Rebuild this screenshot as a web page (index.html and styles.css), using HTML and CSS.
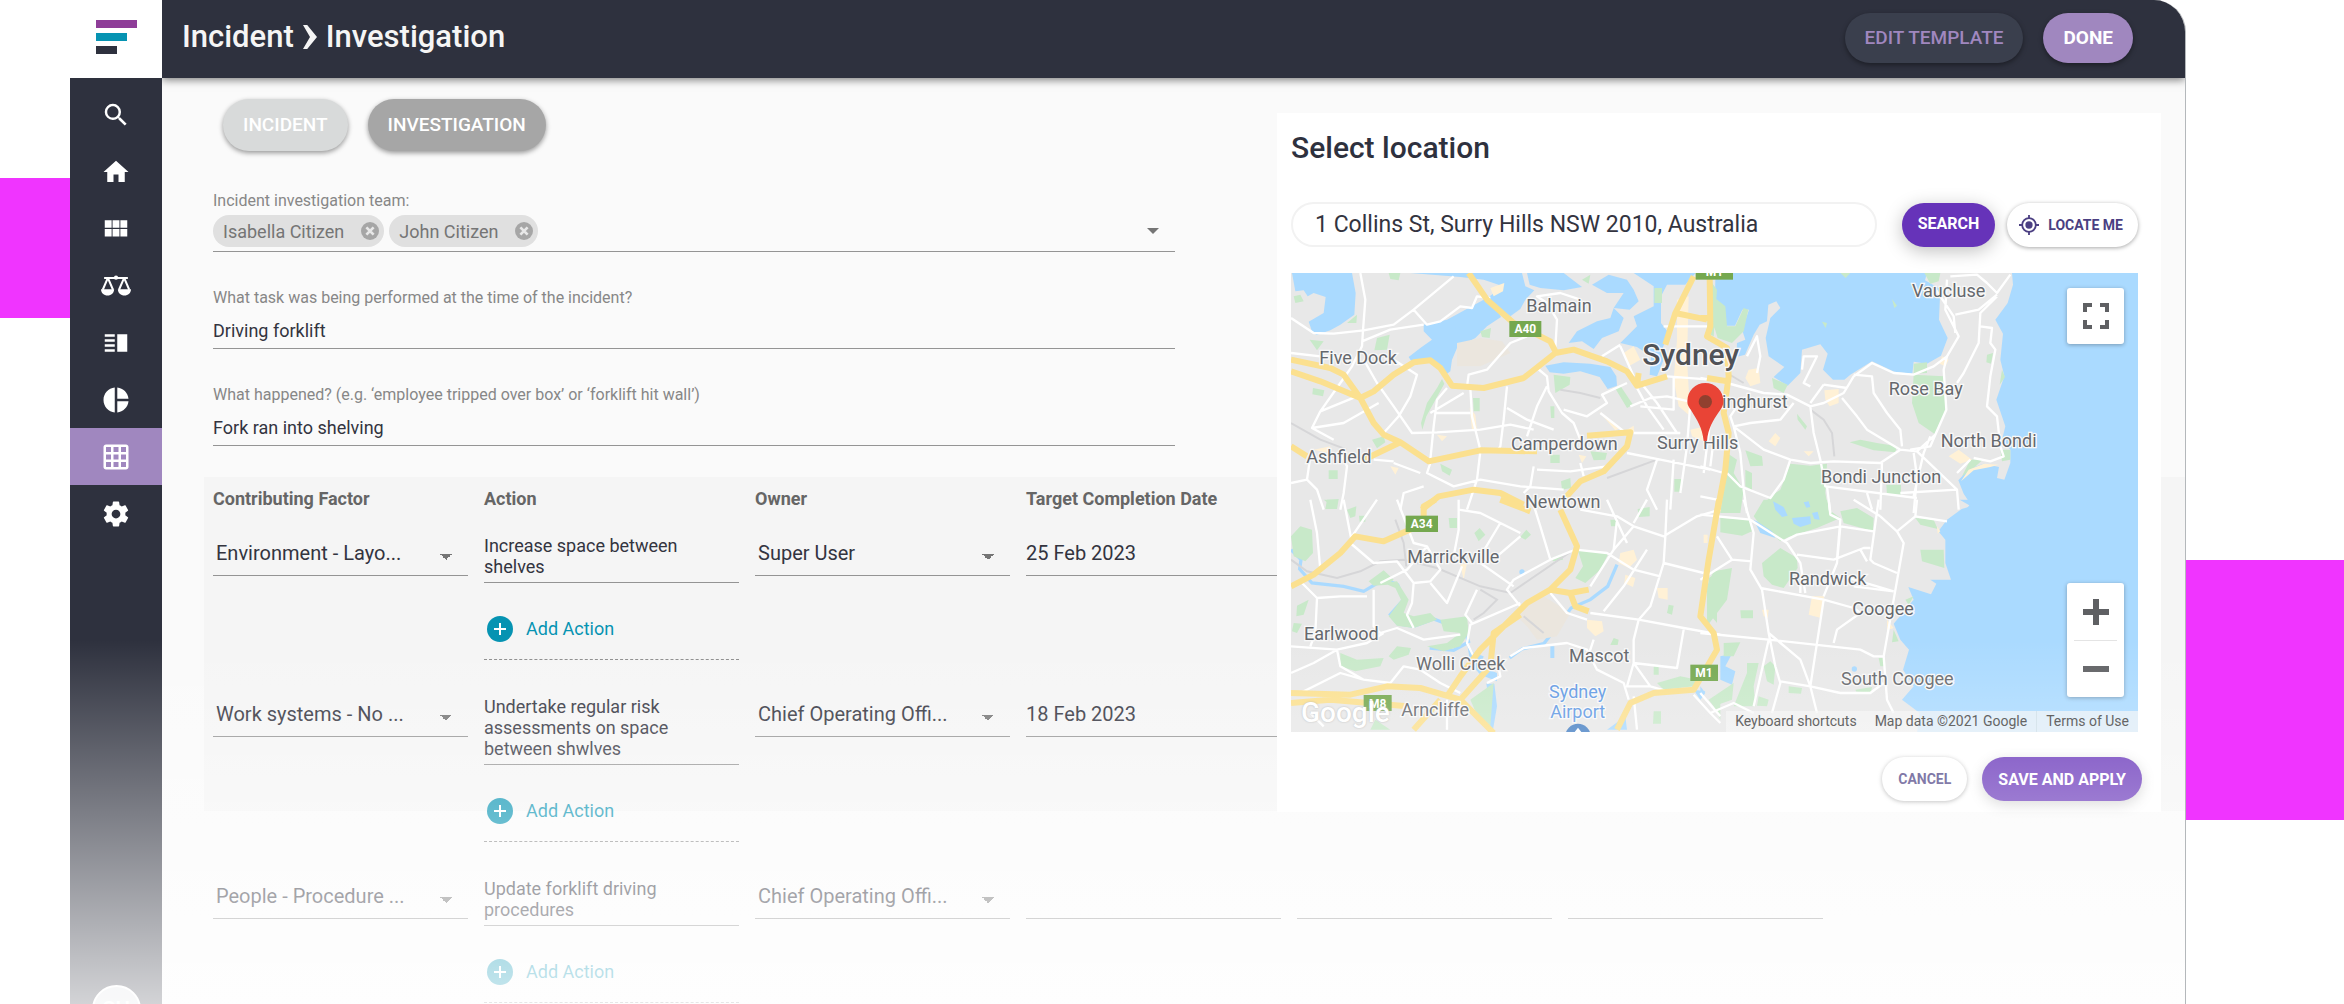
FILE: index.html
```html
<!DOCTYPE html>
<html lang="en">
  <head>
    <meta charset="UTF-8" />
    <meta name="viewport" content="width=device-width, initial-scale=1.0" />
    <title>Incident Investigation</title>
    <link rel="stylesheet" href="styles.css">
  </head>
  <body>
    <div class="stage">
      <div class="block block-left"></div>
      <div class="app">
        <nav class="sidebar">
          <a href="#" class="logo" aria-label="Dashboard">
            <span class="bar bar-purple"></span>
            <span class="bar bar-teal"></span>
            <span class="bar bar-dark"></span>
          </a>
          <div class="menu">
            <a href="#" class="menu-item" aria-label="Search">
              <svg viewBox="0 0 24 24"><path d="M15.5 14h-.79l-.28-.27A6.47 6.47 0 0 0 16 9.5 6.5 6.5 0 1 0 9.5 16c1.61 0 3.09-.59 4.23-1.57l.27.28v.79l5 4.99L20.490 19l-4.990-5zm-6 0C7.010 14 5 11.990 5 9.500S7.010 5 9.500 5 14 7.010 14 9.500 11.990 14 9.500 14z"/></svg>
            </a>
            <a href="#" class="menu-item" aria-label="Home">
              <svg viewBox="0 0 24 24"><path d="M10 20v-6h4v6h5v-8h3L12 3 2 12h3v8z"/></svg>
            </a>
            <a href="#" class="menu-item" aria-label="Modules">
              <svg viewBox="0 0 24 24"><path d="M3 11h5.500V5H3v6zm0 7h5.500v-6H3v6zm6.250 0h5.500v-6h-5.500v6zm6.250 0H21v-6h-5.500v6zm-6.250-7h5.500V5h-5.500v6zM15.500 5v6H21V5h-5.500z"/></svg>
            </a>
            <a href="#" class="menu-item" aria-label="Compliance">
              <svg viewBox="0 0 24 24"><path fill="none" stroke="#fff" stroke-width="1.600" d="M2.500 5.500h19M5.500 5.500L1.400 15M5.500 5.500L9.600 15M18.500 5.500L14.400 15M18.500 5.500L22.600 15"/><circle cx="12" cy="5.300" r="1.700"/><path d="M0 14.500h10.500c0 3-2.300 5-5.200 5S0 17.500 0 14.500zM13.500 14.500H24c0 3-2.300 5-5.200 5s-5.300-2-5.300-5z"/></svg>
            </a>
            <a href="#" class="menu-item" aria-label="Registers">
              <svg viewBox="0 0 24 24"><path d="M3 15h8v-2H3v2zm0 4h8v-2H3v2zm0-8h8V9H3v2zm0-6v2h8V5H3zm10 0h8v14h-8V5z"/></svg>
            </a>
            <a href="#" class="menu-item" aria-label="Reports">
              <svg viewBox="0 0 24 24"><path d="M11 2v20c-5.070-.5-9-4.790-9-10s3.930-9.500 9-10zm2.030 0v8.990H22c-.47-4.740-4.240-8.520-8.970-8.990zm0 11.010V22c4.740-.47 8.500-4.250 8.970-8.990h-8.970z"/></svg>
            </a>
            <a href="#" class="menu-item active" aria-label="Incidents">
              <svg viewBox="0 0 24 24"><path d="M20 2H4c-1.100 0-2 .9-2 2v16c0 1.100.9 2 2 2h16c1.100 0 2-.9 2-2V4c0-1.100-.9-2-2-2zM8 20H4v-4h4v4zm0-6H4v-4h4v4zm0-6H4V4h4v4zm6 12h-4v-4h4v4zm0-6h-4v-4h4v4zm0-6h-4V4h4v4zm6 12h-4v-4h4v4zm0-6h-4v-4h4v4zm0-6h-4V4h4v4z"/></svg>
            </a>
            <a href="#" class="menu-item" aria-label="Settings">
              <svg viewBox="0 0 24 24"><path d="M19.430 12.980c.04-.32.07-.64.07-.98s-.03-.66-.07-.98l2.110-1.650c.19-.15.24-.42.12-.64l-2-3.460c-.12-.22-.39-.3-.61-.22l-2.490 1c-.52-.4-1.080-.73-1.690-.98l-.38-2.650C14.460 2.180 14.250 2 14 2h-4c-.25 0-.46.180-.49.42l-.38 2.650c-.61.25-1.170.59-1.690.98l-2.490-1c-.23-.09-.49 0-.61.22l-2 3.460c-.13.220-.07.490.12.640l2.110 1.650c-.04.320-.07.650-.07.980s.03.660.07.980l-2.110 1.650c-.19.150-.24.420-.12.640l2 3.460c.12.220.39.300.61.220l2.490-1c.52.400 1.080.730 1.690.980l.38 2.650c.03.240.24.420.49.420h4c.25 0 .46-.180.49-.420l.38-2.650c.61-.250 1.170-.590 1.690-.980l2.490 1c.23.090.49 0 .61-.220l2-3.460c.12-.220.07-.490-.12-.640l-2.110-1.650zM12 15.500c-1.930 0-3.500-1.570-3.500-3.500s1.570-3.500 3.500-3.500 3.500 1.570 3.500 3.500-1.570 3.500-3.500 3.500z"/></svg>
            </a>
          </div>
          <a href="#" class="avatar">SU</a>
        </nav>

        <main class="main">
          <header class="topbar">
            <h1 class="title">
              Incident
              <svg class="crumb" viewBox="1 2 10 20" preserveAspectRatio="none"><path d="M1 2h3l7 10-7 10H1l5-10z"/></svg>
              Investigation
            </h1>
            <button type="button" class="btn btn-edit">EDIT TEMPLATE</button>
            <button type="button" class="btn btn-done">DONE</button>
          </header>

          <div class="content">
            <div class="tabs">
              <button type="button" class="btn btn-tab">INCIDENT</button>
              <button type="button" class="btn btn-tab selected">INVESTIGATION</button>
            </div>

            <form class="fields">
              <div class="field">
                <span class="label" id="team-label">Incident investigation team:</span>
                <div class="team" role="group" aria-labelledby="team-label">
                  <span class="chip">Isabella Citizen
                    <button type="button" class="chip-x" aria-label="Remove Isabella Citizen"><svg viewBox="0 0 20 20"><path d="M6 6l8 8M14 6l-8 8"/></svg></button>
                  </span>
                  <span class="chip">John Citizen
                    <button type="button" class="chip-x" aria-label="Remove John Citizen"><svg viewBox="0 0 20 20"><path d="M6 6l8 8M14 6l-8 8"/></svg></button>
                  </span>
                  <button type="button" class="team-open" aria-label="Choose people"></button>
                </div>
              </div>
              <div class="field">
                <label class="label" for="task">What task was being performed at the time of the incident?</label>
                <input type="text" class="text" id="task" value="Driving forklift" />
              </div>
              <div class="field">
                <label class="label" for="happened">What happened? (e.g. ‘employee tripped over box’ or ‘forklift hit wall’)</label>
                <input type="text" class="text" id="happened" value="Fork ran into shelving" />
              </div>
            </form>

            <div class="actions">
              <table class="actions-table">
                <thead>
                  <tr>
                    <th>Contributing Factor</th>
                    <th>Action</th>
                    <th>Owner</th>
                    <th>Target Completion Date</th>
                    <th></th>
                    <th></th>
                  </tr>
                </thead>
                <tbody>
                  <tr>
                    <td><select class="select" aria-label="Contributing Factor"><option>Environment - Layo...</option></select></td>
                    <td>
                      <textarea class="area" rows="2" aria-label="Action">Increase space between shelves</textarea>
                      <button type="button" class="add"><svg viewBox="0 0 26 26"><circle cx="13" cy="13" r="13"/><path d="M13 7v12M7 13h12"/></svg>Add Action</button>
                    </td>
                    <td><select class="select" aria-label="Owner"><option>Super User</option></select></td>
                    <td><input type="text" class="date" aria-label="Target Completion Date" value="25 Feb 2023" /></td>
                    <td></td>
                    <td></td>
                  </tr>
                  <tr>
                    <td><select class="select" aria-label="Contributing Factor"><option>Work systems - No ...</option></select></td>
                    <td>
                      <textarea class="area" rows="3" aria-label="Action">Undertake regular risk assessments on space between shwlves</textarea>
                      <button type="button" class="add"><svg viewBox="0 0 26 26"><circle cx="13" cy="13" r="13"/><path d="M13 7v12M7 13h12"/></svg>Add Action</button>
                    </td>
                    <td><select class="select" aria-label="Owner"><option>Chief Operating Offi...</option></select></td>
                    <td><input type="text" class="date" aria-label="Target Completion Date" value="18 Feb 2023" /></td>
                    <td></td>
                    <td></td>
                  </tr>
                  <tr>
                    <td><select class="select" aria-label="Contributing Factor"><option>People - Procedure ...</option></select></td>
                    <td>
                      <textarea class="area" rows="2" aria-label="Action">Update forklift driving procedures</textarea>
                      <button type="button" class="add"><svg viewBox="0 0 26 26"><circle cx="13" cy="13" r="13"/><path d="M13 7v12M7 13h12"/></svg>Add Action</button>
                    </td>
                    <td><select class="select" aria-label="Owner"><option>Chief Operating Offi...</option></select></td>
                    <td><input type="text" class="date" aria-label="Target Completion Date" /></td>
                    <td><input type="text" class="date" aria-label="Completed" /></td>
                    <td><input type="text" class="date" aria-label="Comments" /></td>
                  </tr>
                </tbody>
              </table>
            </div>
          </div>

          <section class="modal">
            <h2 class="modal-title">Select location</h2>
            <div class="search-row">
              <input type="text" class="address" aria-label="Address" value="1 Collins St, Surry Hills NSW 2010, Australia" />
              <button type="button" class="pill pill-search">SEARCH</button>
              <button type="button" class="pill pill-light pill-locate">
                <svg class="locate" viewBox="0 0 22 22"><circle cx="11" cy="11" r="7.500" fill="none" stroke="#4b3f82" stroke-width="2"/><circle cx="11" cy="11" r="4"/><path d="M10 0h2v4h-2zM10 18h2v4h-2zM0 10h4v2H0zM18 10h4v2h-4z"/></svg>
                LOCATE ME
              </button>
            </div>
            <div class="map">
              <svg class="map-canvas" viewBox="0 0 2541 1377" preserveAspectRatio="xMidYMid slice">
                <rect class="land" width="2541" height="1377"/>
                <!-- water -->
                <g class="water">
                  <g transform="translate(-32 -40)">
                    <path d="M35 40H215L226 100 222 165 180 195 150 212 108 226 95 215 85 186 130 160 136 112 100 100 82 110 70 92 45 95z"/>
                    <path d="M430 195L500 180 555 150 610 120 640 128 662 172 620 200 585 235 530 265 515 300 510 335 492 348 465 312 440 298 395 308 385 292 420 265 455 240 430 215z"/>
                    <path d="M390 40H725L735 80 762 92 735 120 720 148 690 170 655 150 625 112 668 80 610 60 540 52z"/>
                    <path d="M740 40H850L905 82 850 92 780 85 748 75z"/>
                    <path d="M935 75L985 45 1040 60 1060 90 1075 125 1048 150 1000 145 1030 175 1015 215 965 235 940 268 905 245 865 250 890 215 950 185 990 175 1000 145 1030 100 980 100z"/>
                    <path d="M1060 40H1246L1215 75 1160 75 1142 110 1142 190 1165 220 1148 262 1150 300 1130 350 1108 345 1112 290 1070 262 1020 250 1070 200 1060 170 1120 140 1120 80z"/>
                    <path d="M795 318L850 308 930 312 990 322 1008 350 1010 378 982 388 958 352 900 335 850 342 808 338z"/>
                    <circle cx="532" cy="206" r="6"/>
                  </g>
                  <g transform="translate(1228 -40)">
                    <path d="M70 40H680L674 62 720 88 716 180 742 235 722 288 680 312 640 306 636 342 582 336 515 305 490 288 468 250 488 218 535 222 564 212 548 245 520 275 515 305 450 345 432 360 398 360 368 330 382 282 360 254 305 270 300 340 262 378 220 352 252 322 205 290 196 235 210 175 240 145 228 125 204 135 200 185 178 195 160 225 134 285 108 292 110 250 135 240 125 210 146 150 126 150 104 198 75 198 60 140 44 120 45 60z"/>
                    <path d="M935 40H1330V760H790L810 732 790 702 774 662 806 628 850 612 896 622 890 655 912 660 930 610 930 570 905 540 915 500 888 420 912 350 900 300 908 222 885 180 922 130 938 75z"/>
                  </g>
                  <g transform="translate(1228 680)">
                    <path d="M778 0H1330V700H650L658 640 605 600 640 560 608 510 626 450 600 420 580 372 640 300 624 262 692 284 708 252 690 240 752 240 735 190 735 120 714 95 740 60 784 28 812 20z"/>
                    <path d="M215 0L250 20 290 50 330 40 360 60 320 82 280 72 250 40 218 22zM160 60L215 100 225 115 180 100zM60 470L95 462 75 500 105 515 95 555 60 540zM0 560L15 580 0 600z"/>
                    <circle cx="462" cy="508" r="8"/>
                  </g>
                  <g transform="translate(-32 680)">
                    <path d="M560 430L580 460 610 470 600 500 650 520 650 545 600 525 570 490zM618 552H642L650 620 638 690H618L628 620zM810 440H822V475H810zM1240 570L1275 575 1260 600zM980 690L1035 650 1040 690z"/>
                    <circle cx="725" cy="217" r="8"/>
                    <path class="river" d="M32 150L62 180 58 208 95 250 190 260 250 275 312 238 352 255 370 300 330 345 352 372 400 380 460 358 552 392 566 430"/>
                    <path class="river" d="M1010 195L982 260 930 300 872 325 838 372 790 432 725 448 688 475M448 445L520 452 560 430"/>
                  </g>
                </g>
                <!-- parks -->
                <g class="park">
                  <g transform="translate(-32 -40)">
                    <path d="M325 40H360L355 62 330 58zM290 235L328 225 320 270 282 272zM200 190L230 165 228 190zM88 240L130 245 110 272zM485 358L492 372 438 470 426 510 422 490 440 430 470 385zM578 415H598V455H580zM98 385L132 392 128 410 96 404zM1004 385L1020 378 1058 435 1040 445zM820 345L870 352 868 375 825 400zM810 440H822V475H812zM275 540L310 530 315 548 290 566zM480 612L515 630 508 648 485 635zM145 632H172V658H145zM810 585H838V610H810zM930 575L980 580 975 600 940 602zM842 665L870 655 872 685 845 690zM140 720L175 718 170 748H135zM1182 658H1204V696H1182zM905 60L930 45 925 72zM1122 85H1145V130H1122zM40 110L60 105 70 125 45 130zM600 215L632 205 628 235 605 232z"/>
                  </g>
                  <g transform="translate(1228 -40)">
                    <path d="M48 118L75 140 80 200 105 200 130 145 144 150 130 215 95 250 52 235 35 180zM28 60L50 90 40 230 20 220zM215 355L262 375 250 400 220 385zM640 312L680 308 680 340 640 342zM640 345L730 350 738 450 702 522 655 490 635 430zM860 285L878 280 872 312 858 308zM905 330L914 352 898 375zM448 548L480 540 530 550 590 560 585 578 520 572zM290 462L320 500 315 510 292 480zM270 612L330 618 380 612 375 700 385 760H170L210 710 240 690zM80 580L110 600 100 640 130 690 120 760H60L75 650zM135 572L185 590 188 618 150 620zM558 675H602V705H560zM810 600L850 598 820 625 785 650zM900 570H930V600L905 605zM420 40H450L436 55zM672 40H720L715 65 690 72zM575 118L590 138 582 145zM365 186L380 190 376 205zM135 630L155 640 155 690 135 680z"/>
                  </g>
                  <g transform="translate(-32 680)">
                    <path d="M32 110L60 80 95 90 98 160 75 185 40 170zM50 318L85 300 70 345 48 350zM40 370L65 372 50 400 35 395zM265 245L310 212 340 240 322 255 280 258zM310 250L350 245 385 300 370 340 400 350 450 340 470 360 400 385 350 378 325 350 362 300 345 265zM480 360L560 350 565 400 540 440 490 455 440 440 500 430 540 400 490 395zM180 460L230 480 310 475 300 500 225 515 180 500zM325 470L350 440 392 445 385 465 340 480zM200 30L228 20 225 50 210 55zM505 55H530V85H508zM598 85L615 105 595 125 582 100zM738 90L752 105 735 120 720 112zM892 150L985 160 960 210 915 250 885 235 908 200zM815 175L845 162 848 180 818 185zM990 60H1012V80H992zM1072 28L1108 22 1108 50 1075 52zM1165 315L1180 318 1175 345 1160 340zM1285 235L1310 220V370L1285 340zM570 600L640 550 630 680 600 670zM1130 550L1200 530 1250 540 1240 560 1150 570zM1120 635H1142V672H1118zM1000 415L1015 420 1012 436 990 436zM1300 620L1320 600V660zM130 0H175L150 15zM900 0H940L925 10zM236 48H255V66H238zM1120 500H1135V525H1120zM285 660L330 690H270z"/>
                  </g>
                  <g transform="translate(1228 680)">
                    <path d="M190 0H385V30L420 55 350 85 265 112 240 125 175 70 160 50zM60 55L150 60 155 95 125 108 60 98zM420 35L470 25 520 55 518 95 430 70zM660 150L730 150 732 205 665 185zM645 55L700 60 712 88 660 75zM185 190L240 145 290 175 292 205 250 265 215 255 190 230zM40 215L95 205 80 300 20 380 20 260zM120 332H158V356H122zM70 430L120 428 100 470 70 470zM190 500L210 485 225 500 220 555 200 545zM140 490L175 490 160 560 165 620H100L130 545 140 520zM265 560L305 565 302 582 265 580zM465 570L515 562 512 578 468 576zM615 300L640 290 625 315zM580 390L595 425 575 428zM535 475H552V500H540zM25 600L100 550 95 600 40 620zM175 590L205 600 200 620 170 618z"/>
                  </g>
                </g>
                <!-- lakes inside the parks -->
                <path class="water" transform="translate(1228 680)" d="M218 5L250 22 262 48 245 52 225 30zM275 55L330 50 332 72 300 82 280 72zM335 40L352 36 358 60 342 58zM310 8L325 5 330 22 318 24zM165 62L215 95 225 112 185 98z"/>
                <!-- shops and beaches -->
                <g class="shops">
                  <g transform="translate(-32 -40)">
                    <path d="M630 85L672 70 668 95 640 110zM470 525L500 530 485 545zM568 445L585 465 590 515 575 510zM955 455L1020 505 1005 512zM1190 120L1225 110 1220 300 1230 470 1195 440 1180 360 1190 240zM330 620L355 625 345 645zM895 585L918 590 905 610zM1030 280L1060 260 1080 300 1045 320zM1230 510L1275 500 1270 545 1235 530zM100 570L150 560 145 580zM1040 510L1060 498 1062 520z"/>
                    <path class="sand" d="M530 250L600 235 665 245 690 280 600 320 530 320z"/>
                  </g>
                  <g transform="translate(1228 -40)">
                    <path d="M145 330L175 325 180 370 150 380 135 355zM372 392L415 388 415 430 388 440 375 420zM745 590L775 570 815 600 780 612zM725 290L745 300 735 320 718 312zM310 575L340 575 325 590zM225 520L240 535 225 560 205 545zM782 665L805 630 850 612 895 615 870 622 820 632z"/>
                  </g>
                  <g transform="translate(-32 680)">
                    <path d="M1020 160L1060 150 1070 180 1045 205 1015 190zM1035 225L1065 235 1058 262 1032 250zM1130 265H1162V300L1135 295zM920 360L965 365 970 395 945 410 920 385zM540 195L560 190 550 240zM1270 105H1282V130H1270z"/>
                    <path class="sand" d="M700 340L790 290 870 340 830 410 770 420 740 380z"/>
                  </g>
                  <g transform="translate(1228 680)">
                    <path d="M335 290H372L362 355 325 345zM185 330H205L202 355 190 350zM560 360L580 385 560 392zM710 80L720 95 712 102zM10 105L22 108 16 125z"/>
                  </g>
                </g>
                <!-- rail -->
                <g class="rail">
                  <path transform="translate(-32 -40)" d="M32 490L120 540 200 570M840 390L900 400 960 415M980 655L1130 600"/>
                  <path transform="translate(1228 -40)" d="M330 450L370 480 395 520 402 590M80 340L130 370"/>
                  <path transform="translate(-32 680)" d="M32 180L80 215 170 235 240 215 300 185 370 180 470 205 600 260 690 280 880 150M345 60L370 130 378 200M600 270L650 300 610 340 580 360M730 350L790 400"/>
                </g>
                <!-- local roads -->
                <g class="road">
                  <path transform="translate(-32 -40)" d="M32 175L100 220 160 222 250 212 340 195 400 150 520 50M240 40L255 120 248 212 245 260M245 245L330 210 430 195M400 150L440 195 480 185 540 140 575 145 590 110 630 115M32 280L120 290 215 290M245 260L215 320 180 370 120 455 95 505 160 540M250 300L290 370 340 440 395 520 470 518 600 510 690 495 760 510M340 300L410 345 390 410 355 470 310 520M560 380L565 345 620 330 690 250 740 230M500 385L470 420 460 500 450 600M465 460H570M570 385L575 470 600 570M680 380L670 480 660 560 650 575M680 445L740 480 820 510M770 325L800 350 805 395 845 460 880 490 900 540M800 380L770 440 750 500 740 530M850 450L920 470 980 430 965 405 1040 370M960 460L1050 530M1070 385L1100 440 1150 510M1090 380L1130 430 1190 520M1020 260L1060 350M965 290L1020 255M825 265L830 180 800 130 770 110 840 100 900 120M1060 520H1130L1200 520M1150 200H1280M1160 350L1290 360M1050 440L1110 415 1160 410 1290 440M1040 580L1140 600 1290 630M900 610L910 650M760 620L750 680 730 700M600 575L590 660 560 750M450 610L440 640 520 680 600 660 720 680 850 690M340 610L420 640M280 600L340 605M180 580L200 620 190 700 180 750M32 670L80 660 110 690 130 750M80 660L90 590M770 630L870 635 980 620M450 460L550 400M120 455L230 410M295 430L190 490 95 505M1230 430L1220 560 1200 700M1290 480L1270 640M1130 600L1100 690 1130 750M1180 600L1170 750M360 750L370 700 430 680M1080 440L1180 450 1180 350"/>
                  <path transform="translate(1228 -40)" d="M0 355L80 370 190 400 260 405 330 440 370 430 430 400 460 350 515 310 580 340 640 345 700 320 740 290M740 60L735 150 775 230 740 290 730 330 738 450 705 525 650 575 600 570 540 610 400 605 330 610 270 600 190 570 100 500 90 470 110 440M705 525L690 560 630 570M750 50L830 45 860 70 890 100 930 45M700 80L760 170 765 220M890 105L835 150 765 165M890 110L840 160 835 250 790 340 770 370M840 200L875 205 870 250 885 270 870 350 860 440 890 470 900 560 910 590 870 605 820 595M330 440L340 520 360 600 375 680 650 715M425 415L470 470 500 510 600 570M460 345L515 350 520 400 560 460 600 510 605 560M370 375L440 385M370 375L330 430M330 380L310 370 340 310 350 290 310 290 305 330M140 290L170 230 180 290 170 340M100 500L150 490 240 480 280 430M80 640L120 680 210 715 250 660 270 600M100 500L120 580 130 690 140 760M0 620L70 640 80 560M0 710L50 720M380 680L390 760M500 700L515 750M545 610L540 750M640 580L650 650 640 760M600 700L770 690 775 750M650 575L770 690M810 600L770 640M690 530L670 580 640 710M20 450L60 440M30 620L40 540"/>
                  <path transform="translate(-32 680)" d="M90 0L110 100 120 210M190 0L215 130M290 0L215 110 210 130 280 190 350 185 400 250 395 310 380 345 400 385M65 250L110 295 180 290 260 290M110 295L105 400 90 440M350 0L400 130 440 140 480 210 450 245 400 250M280 270L280 380 300 400 350 385 430 420 540 405M440 140L380 210 300 250M535 0V90L520 170M535 30L600 40 720 100M660 70L600 170M545 200L500 310 450 250M720 110L650 170 600 190 700 260M755 0L780 80 810 180 700 240 680 270 720 320M590 270L555 345 575 370M720 310L570 375 560 430 580 470M810 180L885 150M900 30L1010 50 1060 80 1150 110 1250 50 1320 30M1010 60L1000 150 930 260M885 150L980 160 1060 210 1140 230M1060 80L1000 150M1160 0L1155 110 1150 190 1110 320 1075 360 1060 420 1060 490 1190 505 1210 390M1150 190L1270 220M1100 150L1030 260 970 335M930 340L1075 360 1210 385 1320 405M810 280L860 340 920 360M690 470L730 445 860 430 920 450 950 510 1030 550 1045 600M940 420L920 480M1060 490L1040 560 1110 560 1180 580M1060 490L1110 560M650 480L660 530 620 550M32 520L100 490 170 450 260 430 310 400M32 440L170 450 180 500 250 540 330 550 370 500 420 510 480 550 540 580M60 580L180 520 250 540M1040 130L980 0M1100 0L1060 70M90 640L130 680M500 600V690M1240 585L1290 640 1320 670M1060 590L1070 690"/>
                  <path transform="translate(1228 680)" d="M0 45L150 60M130 0L160 100 150 210 185 270 205 400 225 500 240 550 215 640M150 60L260 130 300 190 315 280M250 125L290 105 420 80 520 95M385 0L390 45 420 60 410 180M290 165L400 180 490 145 510 145M535 0L510 180 520 190 590 220M480 150L500 185M590 95L610 130 580 300 550 470M650 0L645 50 590 95 540 50M460 0L540 50M645 50L740 65M155 185L95 180 50 110M95 180L0 240M180 265L370 300 460 325 480 340 410 390 400 430M370 290L410 190 420 80M370 300L330 560 350 640M0 400L205 420 480 450 520 470 550 470 560 600 580 640M205 400L300 480 330 560M460 260L580 275M330 560L420 580 510 580 550 550M240 545L330 560M205 420L160 620M30 640L100 610 160 640M0 580L60 650M300 250V280M430 230L580 275"/>
                </g>
                <!-- highways -->
                <g class="highway">
                  <g transform="translate(-32 -40)">
                    <path d="M565 40L620 120 700 190 810 245 825 275M32 335L120 365 240 415 280 395 340 345 400 308 450 302 480 325 515 378 610 385 730 355 825 280 880 270 980 305 1040 335 1070 378 1160 350M32 300L150 325 190 345 240 415 280 490 310 525 360 548 445 605 600 572 770 575M360 548L250 600M32 560L80 590M920 528L1050 518 1040 560 970 635 900 665 850 720M425 750L475 710 580 690 660 700 730 735M1240 50L1185 160 1155 255M1185 160L1280 180M1070 378L1075 340"/>
                  </g>
                  <g transform="translate(1228 -40)">
                    <path d="M28 50L30 200 20 230 80 265 85 350 70 460 85 520 75 630 50 760M0 175H30M20 355L80 365"/>
                  </g>
                  <g transform="translate(-32 680)">
                    <path d="M32 260L100 225 180 160 225 110 310 125 400 85 430 60 430 20 465 0M660 0L750 35M840 30L890 140 870 210 810 270M925 270L870 280 810 270 740 310 660 390 600 450 540 530 500 590M870 280L885 320 925 335M720 345L640 400 630 500 540 600M32 580L210 585 320 560 420 565 540 600 640 700M32 610L150 600 380 620M480 600L400 690"/>
                    <path d="M1316 0L1285 180 1260 350 1300 400 1310 450 1240 570 1120 580 1050 610 1010 690"/>
                  </g>
                </g>
                <!-- route shields -->
                <g class="shield">
                  <g transform="translate(-32 -40)"><rect x="687" y="184" width="96" height="48"/><text x="735" y="221">A40</text><rect x="1246" y="18" width="112" height="42"/><text x="1302" y="50">M1</text></g>
                  <g transform="translate(-32 680)"><rect x="376" y="48" width="97" height="49"/><text x="424" y="86">A34</text><rect x="1230" y="495" width="83" height="49"/><text x="1271" y="533">M1</text><rect x="250" y="586" width="84" height="48"/><text x="292" y="624">M8</text></g>
                </g>
                <g class="airport" transform="translate(-32 680)"><circle cx="893" cy="710" r="38"/><path d="M893 684L903 697H883z"/></g>
                <!-- place names -->
                <g class="place">
                  <g transform="translate(-32 -40)">
                    <text x="738" y="157">Balmain</text>
                    <text x="117" y="313">Five Dock</text>
                    <text x="78" y="610">Ashfield</text>
                    <text x="692" y="570">Camperdown</text>
                    <text x="1130" y="569">Surry Hills</text>
                    <text x="734" y="744">Newtown</text>
                    <text class="end" x="1522" y="446">Darlinghurst</text>
                    <text class="city" x="1086" y="317">Sydney</text>
                  </g>
                  <g transform="translate(1228 -40)">
                    <text x="635" y="112">Vaucluse</text>
                    <text x="565" y="406">Rose Bay</text>
                    <text x="721" y="563">North Bondi</text>
                    <text x="362" y="669">Bondi Junction</text>
                  </g>
                  <g transform="translate(-32 680)">
                    <text x="381" y="189">Marrickville</text>
                    <text x="71" y="420">Earlwood</text>
                    <text x="407" y="511">Wolli Creek</text>
                    <text x="866" y="488">Mascot</text>
                    <text x="363" y="649">Arncliffe</text>
                    <text class="air" x="892" y="594">Sydney</text>
                    <text class="air" x="892" y="655">Airport</text>
                  </g>
                  <g transform="translate(1228 680)">
                    <text x="266" y="256">Randwick</text>
                    <text x="456" y="345">Coogee</text>
                    <text x="422" y="557">South Coogee</text>
                  </g>
                </g>
                <g class="pin" transform="translate(1243 332)">
                  <path d="M-5 172C-9 130-26 108-40 84-50 68-54 66-54 52A54 54 0 1 1 54 52C54 66 50 72 40 86 24 110 8 134 5 172z"/>
                  <circle cx="0" cy="54" r="20"/>
                </g>
              </svg>
              <span class="google">Google</span>
              <button type="button" class="map-full" aria-label="Full screen">
                <svg viewBox="0 0 26 26"><path d="M2 9V2h7M17 2h7v7M24 17v7h-7M9 24H2v-7"/></svg>
              </button>
              <div class="map-zoom">
                <button type="button" aria-label="Zoom in"><svg viewBox="0 0 26 26"><path d="M13 0v26M0 13h26"/></svg></button>
                <button type="button" aria-label="Zoom out"><svg viewBox="0 0 26 26"><path d="M0 13h26"/></svg></button>
              </div>
              <div class="credits">
                <button type="button">Keyboard shortcuts</button>
                <span>Map data ©2021 Google</span>
                <a href="#">Terms of Use</a>
              </div>
            </div>
            <div class="modal-foot">
              <button type="button" class="pill pill-light">CANCEL</button>
              <button type="button" class="pill pill-save">SAVE AND APPLY</button>
            </div>
          </section>
        </main>
      </div>
      <div class="block block-right"></div>
    </div>
  </body>
</html>
```

FILE: styles.css
```css
* {
  box-sizing: border-box;
}
body {
  margin: 0;
  background: #fff;
  font-family: Roboto, "Liberation Sans", sans-serif;
  color: #33343f;
}
button,
input,
select,
textarea {
  margin: 0;
  padding: 0;
  border: none;
  border-radius: 0;
  background: none;
  font: inherit;
  color: inherit;
}
button {
  cursor: pointer;
}
a {
  color: inherit;
  text-decoration: none;
}

/* page */
.stage {
  display: grid;
  grid-template-columns: 70px 1fr 158px;
  height: 100vh;
  overflow: hidden;
}
.block {
  background: #f034ff;
}
.block-left {
  margin-top: 178px;
  height: 140px;
}
.block-right {
  margin-top: 560px;
  height: 260px;
}
.app {
  position: relative;
  display: flex;
  height: 100vh;
  overflow: hidden;
  border-right: 1px solid #b4b8bb;
  border-top-right-radius: 32px;
}
/* the lower part fades out to white */
.app::after {
  content: "";
  position: absolute;
  inset: 640px 0 0 0;
  z-index: 5;
  background: linear-gradient(rgba(255, 255, 255, 0), rgba(255, 255, 255, 0.79));
  pointer-events: none;
}

/* sidebar */
.sidebar {
  position: relative;
  z-index: 1;
  display: flex;
  flex-direction: column;
  align-items: stretch;
  width: 92px;
  flex: none;
  background: #2e313e;
}
.logo {
  display: flex;
  flex-direction: column;
  gap: 5px;
  height: 78px;
  padding: 20px 0 0 26px;
  background: #fff;
}
.bar {
  height: 8px;
}
.bar-purple {
  width: 41px;
  background: #8e3d98;
}
.bar-teal {
  width: 31px;
  background: #0693b2;
}
.bar-dark {
  width: 21px;
  background: #2e313e;
}
.menu {
  padding-top: 8px;
}
.menu-item {
  display: flex;
  align-items: center;
  justify-content: center;
  height: 57px;
}
.menu-item svg {
  width: 30px;
  height: 30px;
  fill: #fff;
}
.menu-item.active {
  background: #a087bf;
}
.avatar {
  align-self: center;
  width: 49px;
  height: 49px;
  margin-top: auto;
  margin-bottom: -30px;
  border: 2px solid #fff;
  border-radius: 50%;
  background: #e0e2e6;
  color: #fff;
  font-size: 22px;
  font-weight: 500;
  line-height: 45px;
  text-align: center;
}

/* top bar */
.main {
  position: relative;
  flex: 1;
  min-width: 0;
  background: #fafafa;
}
.topbar {
  display: flex;
  align-items: flex-start;
  gap: 20px;
  height: 78px;
  padding: 13px 52px 0 20px;
  background: #2e313e;
  box-shadow: 0 2px 8px rgba(0, 0, 0, 0.5);
}
.title {
  display: flex;
  align-items: center;
  gap: 9px;
  margin: 0 auto 0 0;
  color: #f5f5f5;
  font-size: 31px;
  font-weight: 500;
  line-height: 48px;
}
.crumb {
  width: 14px;
  height: 24px;
  fill: #f5f5f5;
}
.btn {
  height: 50px;
  padding: 0 20px 2px;
  border-radius: 25px;
  font-size: 19px;
  font-weight: 500;
  color: #fff;
  box-shadow: 0 2px 5px rgba(0, 0, 0, 0.4);
}
.btn-edit {
  background: #3a3f4d;
  color: #a087bf;
}
.btn-done {
  background: #a087bf;
  font-weight: 700;
}

/* form */
.content {
  padding: 21px 0 0 42px;
}
.tabs {
  display: flex;
  gap: 20px;
  padding-left: 19px;
}
.btn-tab {
  height: 52px;
  border-radius: 26px;
  background: #d8dada;
}
.btn-tab.selected {
  background: #a6a6a6;
}
.fields {
  display: flex;
  flex-direction: column;
  gap: 36px;
  width: 971px;
  padding: 40px 0 0 9px;
}
.field {
  display: flex;
  flex-direction: column;
  gap: 4px;
}
.label {
  color: #878787;
  font-size: 16px;
  line-height: 20px;
}
.team {
  display: flex;
  align-items: center;
  gap: 5px;
  height: 37px;
  padding-bottom: 4px;
  border-bottom: 1px solid #949494;
}
.chip {
  display: flex;
  align-items: center;
  gap: 17px;
  height: 32px;
  padding: 0 5px 0 10px;
  border-radius: 16px;
  background: #e0e0e0;
  color: #757575;
  font-size: 18px;
}
.chip-x {
  width: 18px;
  height: 18px;
  border-radius: 50%;
  background: #a6a6a6;
}
.chip-x svg {
  display: block;
  fill: none;
  stroke: #e8e8e8;
  stroke-width: 3;
}
.team-open {
  width: 12px;
  height: 6px;
  margin-left: auto;
  margin-right: 16px;
  background: #757575;
  clip-path: polygon(0 0, 100% 0, 50% 100%);
}
.text {
  width: 100%;
  height: 37px;
  border-bottom: 1px solid #949494;
  font-size: 18px;
}

/* contributing factors */
.actions {
  margin-top: 31px;
  padding: 10px 0 0 1px;
  background: linear-gradient(#f5f5f5, #f5f5f5) no-repeat 0 0 / 100% 334px;
}
.actions-table {
  width: 1626px;
  table-layout: fixed;
  border-spacing: 0;
  margin-left: 8px;
}
.actions-table th {
  padding: 0 0 24px;
  color: #666;
  font-size: 18px;
  font-weight: 700;
  line-height: 24px;
  text-align: left;
}
.actions-table td {
  padding: 0 16px 36px 0;
  vertical-align: top;
}
.select,
.date {
  display: block;
  width: 100%;
  height: 41px;
  padding-bottom: 4px;
  border-bottom: 1px solid #949494;
  font-size: 20px;
}
.select {
  appearance: none;
  padding-left: 3px;
  background:
    linear-gradient(to bottom right, #757575 50%, transparent 50%) no-repeat right 16px top 19px / 6px 6px,
    linear-gradient(to bottom left, #757575 50%, transparent 50%) no-repeat right 22px top 19px / 6px 6px;
}
.area {
  display: block;
  width: 100%;
  height: auto;
  padding: 0 24px 5px 0;
  border-bottom: 1px solid #949494;
  resize: none;
  overflow: hidden;
  font-size: 18px;
  line-height: 21px;
}
.add {
  display: flex;
  align-items: center;
  gap: 13px;
  width: 100%;
  height: 77px;
  padding: 15px 3px 0;
  border-bottom: 1px dashed #8c8c8c;
  color: #0693b2;
  font-size: 18px;
}
.add svg {
  width: 26px;
  height: 26px;
  fill: #0693b2;
}
.add path {
  stroke: #fff;
  stroke-width: 2;
}

/* location dialog */
.modal {
  position: absolute;
  top: 113px;
  left: 1115px;
  right: 24px;
  z-index: 2;
  padding: 15px 19px 11px 14px;
  background: #fff;
}
.modal-title {
  margin: 0 0 34px;
  color: #2e313e;
  font-size: 30px;
  font-weight: 500;
  line-height: 40px;
}
.search-row {
  display: flex;
  align-items: center;
  padding-right: 4px;
}
.address {
  flex: 1;
  min-width: 0;
  height: 45px;
  margin-right: 25px;
  padding: 0 22px;
  border: 2px solid #f2f2f2;
  border-radius: 23px;
  font-size: 23px;
}
.pill {
  display: flex;
  align-items: center;
  justify-content: center;
  gap: 9px;
  height: 44px;
  padding: 0 16px;
  border-radius: 22px;
  color: #fff;
  font-size: 16px;
  font-weight: 700;
}
.pill-search {
  margin-right: 12px;
  padding-bottom: 2px;
  background: #6633b9;
  box-shadow: 0 4px 18px rgba(0, 0, 0, 0.25);
}
.pill-light {
  background: #fff;
  color: #4b3f82;
  font-size: 14px;
  box-shadow: 0 1px 4px rgba(0, 0, 0, 0.35);
}
.pill-locate {
  padding: 0 15px 0 12px;
}
.locate {
  width: 20px;
  height: 22px;
  fill: #4b3f82;
}
.pill-save {
  background: #6633b9;
  box-shadow: 0 4px 14px rgba(0, 0, 0, 0.2);
}
.map {
  position: relative;
  height: 459px;
  margin: 26px 4px 0 0;
  overflow: hidden;
}
.map-canvas {
  display: block;
  width: 100%;
  height: 100%;
}
.land {
  fill: #e8e8e8;
}
.water {
  fill: #aadaff;
}
.river {
  fill: none;
  stroke: #aadaff;
  stroke-width: 10;
}
.park {
  fill: #c8e9c9;
}
.shops {
  fill: #fff1d6;
}
.sand {
  fill: #ebe6de;
}
.rail {
  fill: none;
  stroke: #d6d6d8;
  stroke-width: 6;
}
.road {
  fill: none;
  stroke: #fff;
  stroke-width: 7;
  stroke-linejoin: round;
}
.highway {
  fill: none;
  stroke: #fbe08f;
  stroke-width: 18;
  stroke-linejoin: round;
}
.shield {
  fill: #75a84f;
}
.shield text {
  fill: #fff;
  font-size: 36px;
  font-weight: 700;
  text-anchor: middle;
}
.airport {
  fill: #4a82c4;
}
.airport path {
  fill: #fff;
}
.place {
  fill: #65686d;
  stroke: #f8f8f8;
  stroke-width: 8;
  paint-order: stroke;
  font-size: 54px;
}
.place .city {
  fill: #505257;
  font-size: 90px;
  font-weight: 500;
}
.place .end {
  text-anchor: end;
}
.place .air {
  fill: #5f98e3;
  text-anchor: middle;
}
.pin {
  fill: #e94436;
}
.pin circle {
  fill: #90402f;
}
.google {
  position: absolute;
  left: 10px;
  bottom: 3px;
  color: #fff;
  font-size: 28px;
  font-weight: 500;
  line-height: 32px;
  text-shadow: 0 0 2px #aaa;
}
.map-full,
.map-zoom {
  position: absolute;
  right: 14px;
  width: 57px;
  border-radius: 3px;
  background: #fff;
  box-shadow: 0 1px 4px rgba(0, 0, 0, 0.3);
}
.map-full {
  top: 15px;
  height: 56px;
}
.map-full svg {
  display: block;
  width: 26px;
  margin: 0 auto;
  fill: none;
  stroke: #5f6063;
  stroke-width: 4;
}
.map-zoom {
  bottom: 35px;
  padding: 0 7px;
}
.map-zoom button {
  display: block;
  width: 100%;
  height: 57px;
}
.map-zoom button + button {
  border-top: 1px solid #e4e4e4;
}
.map-zoom svg {
  display: block;
  width: 26px;
  margin: 0 auto;
  stroke: #5f6063;
  stroke-width: 6;
}
.credits {
  position: absolute;
  right: 0;
  bottom: 0;
  display: flex;
  height: 21px;
  background: rgba(245, 245, 245, 0.7);
  color: #444;
  font-size: 14px;
  line-height: 21px;
}
.credits > * {
  padding: 0 9px;
}
.credits a {
  border-left: 1px solid #cfdfe8;
}
.modal-foot {
  display: flex;
  justify-content: flex-end;
  gap: 15px;
  padding-top: 25px;
}
```
